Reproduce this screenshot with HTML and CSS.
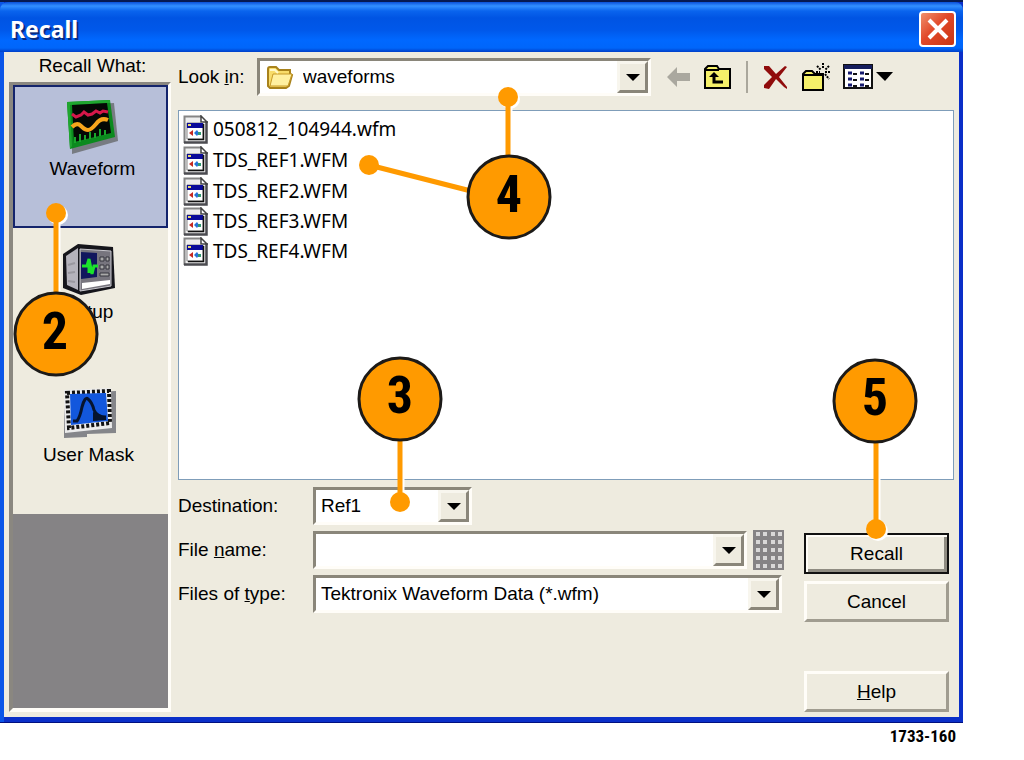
FILE: index.html
```
<!DOCTYPE html>
<html lang="en">
<head>
<meta charset="utf-8">
<title>Recall</title>
<link rel="stylesheet" href="styles.css">
</head>
<body>
<svg class="defs" width="0" height="0" aria-hidden="true">
  <symbol id="file" viewBox="0 0 25 29">
    <path d="M1 1h17l6 6v21H1z" fill="#eee"/>
    <path d="M1.500 28V1.500h17" fill="none" stroke="#858585" stroke-width="2"/>
    <path d="M1 27.500h22.500V6" fill="none" stroke="#4b4b50" stroke-width="2.500"/>
    <path d="M18 1v6h6z" fill="#fff" stroke="#444" stroke-width="1.500"/>
    <path d="M4 8h16v16H4z" fill="#fff" stroke="#888"/>
    <path d="M4 8h16v5H4z" fill="#0a0a9a"/><path d="M5 9h3v2H5z" fill="#e8d86a"/>
    <path d="M6 18l4-3v6z" fill="#c62a20"/><path d="M11 18l3-3 2 3-2 3z" fill="#2672d8"/><path d="M15 17h3v3h-3z" fill="#2f9a70"/>
    <path d="M20.500 9v15.500H5" fill="none" stroke="#111" stroke-width="1.500"/>
  </symbol>
</svg>
<main class="dialog">
  <header class="titlebar">
    <h1>Recall</h1>
    <button class="close" aria-label="Close"><svg width="24" height="24" viewBox="0 0 24 24"><path d="M3 3l18 18M21 3L3 21" stroke="#fff" stroke-width="4"/></svg></button>
  </header>
  <div class="content">
    <aside class="side">
      <h2>Recall What:</h2>
      <nav class="well">
        <button class="kind selected">
          <svg width="54" height="56" viewBox="0 0 54 56">
            <path d="M6 6l42-2 4 38-46 13z" fill="#777b82"/>
            <path d="M1 3l43-2 5 37-45 12z" fill="#0b8a1e"/><path d="M1 3l43-2v3L4 6l2 41-2 3z" fill="#1fa62f"/>
            <path d="M6 6l35-2 4 30-37 9z" fill="#050805"/>
            <path d="M9 44v-6M14 43v-8M19 41v-5M24 40v-7M29 39v-5M34 37v-7M39 36v-5" stroke="#19a52c" stroke-width="2"/>
            <path d="M6 15l4 3 5-2 3-3 4 3 4-1 4-3 4 2 3-2 5 1" fill="none" stroke="#d5174a" stroke-width="3"/>
            <path d="M6 28q5-5 9-1t7 4 8-6q5-7 12-4" fill="none" stroke="#f7a51c" stroke-width="4"/>
          </svg>
          <span>Waveform</span>
        </button>
        <button class="kind">
          <svg width="54" height="56" viewBox="0 0 54 56">
            <path d="M1 12L16 2l35 3 2 41-34 7L1 46z" fill="#15151b"/>
            <path d="M4 14l12-8v42L5 43z" fill="#b5b3bc"/><path d="M6 23l7-2M6 31l7-1M6 39l7 1" stroke="#9a98a0" stroke-width="2"/>
            <path d="M18 7l31 2v35l-31 5z" fill="#77757e" stroke="#c9c8ce"/>
            <path d="M19 10l16 1v24l-16 2z" fill="#11165d"/>
            <path d="M20 24h5l2-7 3 15 2-8h4M27 17v14" fill="none" stroke="#1be32b" stroke-width="3"/>
            <path d="M38 15h4v4h-4zM44 15h3v4h-3zM38 23h4v4h-4zM44 23h3v4h-3zM38 31h9v3h-9z" fill="#aaa" stroke="#34343c"/>
            <path d="M20 41l28-3v4l-28 5z" fill="#fff"/>
          </svg>
          <span>Setup</span>
        </button>
        <button class="kind">
          <svg width="54" height="56" viewBox="0 0 54 56">
            <path d="M4 8l50-2v42l-29 1v3L2 53V33z" fill="#85868a"/>
            <path d="M2 5l47-2 1 40-47 5z" fill="#ececec"/>
            <path d="M5 8l42-2 1 32-41 5z" fill="none" stroke="#111" stroke-width="4" stroke-dasharray="3 2"/>
            <path d="M8 9l36-1 2 28-37 4z" fill="#1257dd"/>
            <path d="M11 36h4q3-4 5-14 3-11 6-8 4 3 6 11 3 7 12 7" fill="none" stroke="#06142f" stroke-width="3"/>
            <path d="M31 27l13 5v3l-13 1z" fill="#06142f"/>
          </svg>
          <span>User Mask</span>
        </button>
      </nav>
    </aside>
    <section class="browse">
      <div class="toolbar">
        <label for="look">Look <u>i</u>n:</label>
        <div class="combo look">
          <svg width="28" height="24" viewBox="0 0 28 24"><path d="M2 4q0-2 2-2h6l3 3h11v4l2 1-3 11-3 2H4l-2-2z" fill="#f8dc6a" stroke="#a8821c" stroke-width="2"/><path d="M7 9h19l-4 12H4z" fill="#fff0a0" stroke="#c79a28"/><path d="M4 5h5l3 3" stroke="#fff8c8" fill="none" stroke-width="2"/></svg>
          <select id="look"><option>waveforms</option></select><span class="arrow"></span>
        </div>
        <div class="tools">
          <button aria-label="Back"><svg width="24" height="26" viewBox="0 0 24 26"><path d="M0 13l10-10v6h13v8H10v6z" fill="#aaa89f"/></svg></button>
          <button aria-label="Up one level"><svg width="30" height="26" viewBox="0 0 30 26"><path d="M2 5l3-3h9l2 3h11v19H2z" fill="#f5f06a" stroke="#000" stroke-width="2"/><path d="M2 6h14" stroke="#000" stroke-width="2"/><path d="M11 12v6h9" fill="none" stroke="#000" stroke-width="3"/><path d="M6 13l5-5 5 5z"/></svg></button>
          <i class="rule"></i>
          <button aria-label="Delete"><svg width="26" height="26" viewBox="0 0 26 26"><path d="M1 2h5l7 8 9-8 2 1-8 10 8 10v2l-3-2-8-8-7 10-5-1v-3l8-8-8-8z" fill="#900c0c"/></svg></button>
          <button aria-label="New folder"><svg width="30" height="30" viewBox="0 0 30 30"><path d="M2 12l3-3h6l3 3h8v16H2z" fill="#f5f06a" stroke="#000" stroke-width="2"/><path d="M2 13h20" stroke="#000" stroke-width="2"/><path d="M22 1v5M16 4l4 4M28 4l-4 4M24 10h5M15 10h4M24 12l4 5M22 12v4" stroke="#000" stroke-width="2" stroke-dasharray="2 1"/></svg></button>
          <button aria-label="View menu"><svg width="50" height="26" viewBox="0 0 50 26"><path d="M1 1h28v23H1z" fill="#fff" stroke="#111" stroke-width="2"/><path d="M1 1h28v4H1z" fill="#151d5c"/><path d="M5 9h4M5 15h4M5 21h4M17 9h4M17 15h4M17 21h4" stroke="#151a70" stroke-width="3"/><path d="M10 10h4M10 16h4M10 22h4M22 10h4M22 16h4M22 22h4" stroke="#111" stroke-width="2"/><path d="M33 8h17l-8 9z"/></svg></button>
        </div>
      </div>
      <ul class="files">
        <li><button><svg width="25" height="29"><use href="#file"/></svg>050812_104944.wfm</button></li>
        <li><button><svg width="25" height="29"><use href="#file"/></svg>TDS_REF1.WFM</button></li>
        <li><button><svg width="25" height="29"><use href="#file"/></svg>TDS_REF2.WFM</button></li>
        <li><button><svg width="25" height="29"><use href="#file"/></svg>TDS_REF3.WFM</button></li>
        <li><button><svg width="25" height="29"><use href="#file"/></svg>TDS_REF4.WFM</button></li>
      </ul>
      <div class="bottom">
        <div class="fields">
          <label for="dest">Destination:</label>
          <div class="combo dest"><select id="dest"><option>Ref1</option></select><span class="arrow"></span></div>
          <label for="name">File <u>n</u>ame:</label>
          <div class="namerow">
            <div class="combo name"><input id="name" type="text"><button class="arrow" aria-label="Recent names"></button></div>
            <button class="keypad" aria-label="Keypad"><svg width="31" height="40" viewBox="0 0 31 40"><path d="M0 0h31v40H0z" fill="#858385"/><path d="M5 2v38M12 2v38M20 2v38M27 2v38" stroke="#d9d8d8" stroke-width="4" stroke-dasharray="4 4"/></svg></button>
          </div>
          <label for="type">Files of <u>t</u>ype:</label>
          <div class="combo"><select id="type"><option>Tektronix Waveform Data (*.wfm)</option></select><span class="arrow"></span></div>
        </div>
        <div class="actions">
          <button class="push default">Recall</button>
          <button class="push">Cancel</button>
          <button class="push help"><u>H</u>elp</button>
        </div>
      </div>
    </section>
  </div>
</main>
<p class="figure">1733-160</p>
<svg class="callouts" width="1024" height="760" viewBox="0 0 1024 760">
  <g class="halo"><path d="M58 215v80M402 440v64M510 99v60M878 440v91"/><circle cx="58" cy="215" r="10"/><circle cx="402" cy="504" r="10"/><circle cx="510" cy="99" r="10"/><circle cx="878" cy="531" r="10"/></g>
  <g class="pin"><path d="M56 213v82M400 438v64M508 97v62M369 165l102 26M876 440v89"/><circle cx="56" cy="213" r="10"/><circle cx="400" cy="502" r="10"/><circle cx="508" cy="97" r="10"/><circle cx="369" cy="165" r="10"/><circle cx="876" cy="529" r="10"/></g>
  <g class="disc"><circle cx="56" cy="334" r="41"/><circle cx="400" cy="399" r="41"/><circle cx="509" cy="197" r="41"/><circle cx="875" cy="401" r="41"/></g>
  <g class="digit"><text x="55" y="349">2</text><text x="400" y="413">3</text><text x="509" y="212">4</text><text x="875" y="415">5</text></g>
</svg>
</body>
</html>
```
FILE: styles.css
```
* { box-sizing: border-box; }
body {
  position: relative;
  margin: 0;
  padding-right: 61px;
  background: #fff;
  color: #000;
  font: 19px/24px "Liberation Sans", Arial, sans-serif;
}
button, input, select { font: inherit; color: inherit; margin: 0; padding: 0; border: 0; background: none; border-radius: 0; }
svg { display: block; flex: none; }
.defs { position: absolute; }
.dialog {
  padding: 0 4px 5px;
  border-top: 2px solid #061a52;
  background: linear-gradient(90deg, #0a55e8 0, #0a55e8 4px, #0a2fc8 4px, #0a2fc8 100%);
  border-bottom: 1px solid #001080;
}
.titlebar {
  display: flex;
  align-items: center;
  justify-content: space-between;
  height: 50px;
  margin: 0 -4px;
  padding: 4px 7px 0 10px;
  border-radius: 8px 8px 0 0;
  background: linear-gradient(#0a50d8 0, #3390ff 4px, #0a64ee 9px, #0054e3 16px, #0058ea 28px, #0068ff 38px, #0066fa 46px, #003fc8 50px);
}
.titlebar h1 {
  margin: 0;
  color: #fff;
  font: bold 23px/30px "Noto Sans", sans-serif;
  text-shadow: 2px 2px 0 #0a2a80;
}
.close {
  display: grid;
  place-items: center;
  width: 37px;
  height: 36px;
  border: 2px solid #fff;
  border-radius: 4px;
  background: linear-gradient(135deg, #f0906c, #e1492a 45%, #c93512);
}
.content { display: flex; gap: 7px; padding: 0 5px 5px; background: #eeebdf; }
.side { display: flex; flex-direction: column; width: 162px; }
.side h2 { margin: 0; padding: 2px 0 4px 5px; font: inherit; text-align: center; }
.well {
  flex: 1;
  border: solid;
  border-width: 3px 3px 4px 4px;
  border-color: #8a8780 #fffdf8 #fffdf8 #8a8780;
  background: #858385;
}
.kind {
  display: flex;
  flex-direction: column;
  align-items: center;
  gap: 2px;
  width: 100%;
  height: 143px;
  padding: 14px 4px 0 0;
  background: #eeebdf;
}
.selected { padding: 12px 0 0 4px; border: 2px solid #14246c; background: #b7bfd9; }
.browse { flex: 1; min-width: 0; }
.toolbar { display: flex; align-items: center; height: 58px; padding-bottom: 8px; }
.toolbar label { width: 79px; }
.combo {
  display: flex;
  align-items: center;
  height: 38px;
  border: 3px solid #fffdf8;
  border-top-color: #8a867a;
  border-left-color: #8a867a;
  background: #fff;
}
.combo select, .combo input { flex: 1; min-width: 0; height: 100%; padding-left: 5px; appearance: none; outline: 0; }
.arrow {
  display: grid;
  place-items: center;
  width: 31px;
  height: 100%;
  border: 3px solid #f8f6ee;
  border-right-color: #8a867a;
  border-bottom-color: #8a867a;
  background: #eeebdf;
}
.arrow::after { content: ""; border: 7px solid transparent; border-top: 7px solid #000; border-bottom: 0; }
.look { flex: 1; padding-left: 6px; }
.look select { padding-left: 9px; }
.tools { display: flex; align-items: center; width: 303px; padding-left: 16px; }
.tools button + button { margin-left: 12px; }
.rule { width: 2px; height: 32px; margin: 0 15px 0 13px; background: #aaa79c; }
.files {
  height: 370px;
  margin: 0;
  padding: 3px 4px;
  border: 1px solid #7f9db9;
  background: #fff;
  list-style: none;
}
.files li { height: 30px; margin-bottom: 1px; }
.files li:nth-child(n+3) { margin-bottom: 0; }
.files button { display: flex; align-items: center; gap: 5px; font: 19px/30px "Noto Sans", sans-serif; }
.bottom { display: flex; justify-content: space-between; padding: 7px 5px 0 0; }
.fields {
  flex: 1;
  display: grid;
  grid-template-columns: 135px minmax(0, 469px);
  grid-auto-rows: 38px;
  row-gap: 6px;
  align-items: center;
  align-content: start;
}
.dest { width: 159px; }
.namerow { display: flex; align-items: center; gap: 6px; margin-right: -2px; }
.name { flex: 1; }
.actions { display: flex; flex-direction: column; width: 145px; padding-top: 46px; }
.push {
  height: 41px;
  margin-bottom: 7px;
  border: 3px solid #fffdf8;
  border-right-color: #a09c90;
  border-bottom-color: #a09c90;
  background: #eeebdf;
}
.default { border: 2px solid #111; box-shadow: inset 2px 2px #fffdf8, inset -3px -3px #8f8c82; }
.help { margin: 42px 0 0; }
.figure { margin: 0; padding-right: 7px; text-align: right; font: bold 17px/26px "Liberation Sans Narrow", "Roboto Condensed", Roboto, sans-serif; }
.callouts { position: absolute; top: 0; left: 0; pointer-events: none; }
.halo { fill: #fff; stroke: #fff; }
.pin { fill: #ff9a00; stroke: #ff9a00; }
.halo path, .pin path { stroke-width: 5px; }
.halo circle, .pin circle { stroke: none; }
.disc { fill: #ff9a00; stroke: #1c1a18; stroke-width: 3px; }
.digit { font: bold 52px "Liberation Sans Narrow", "Roboto Condensed", Roboto, sans-serif; text-anchor: middle; }
```
